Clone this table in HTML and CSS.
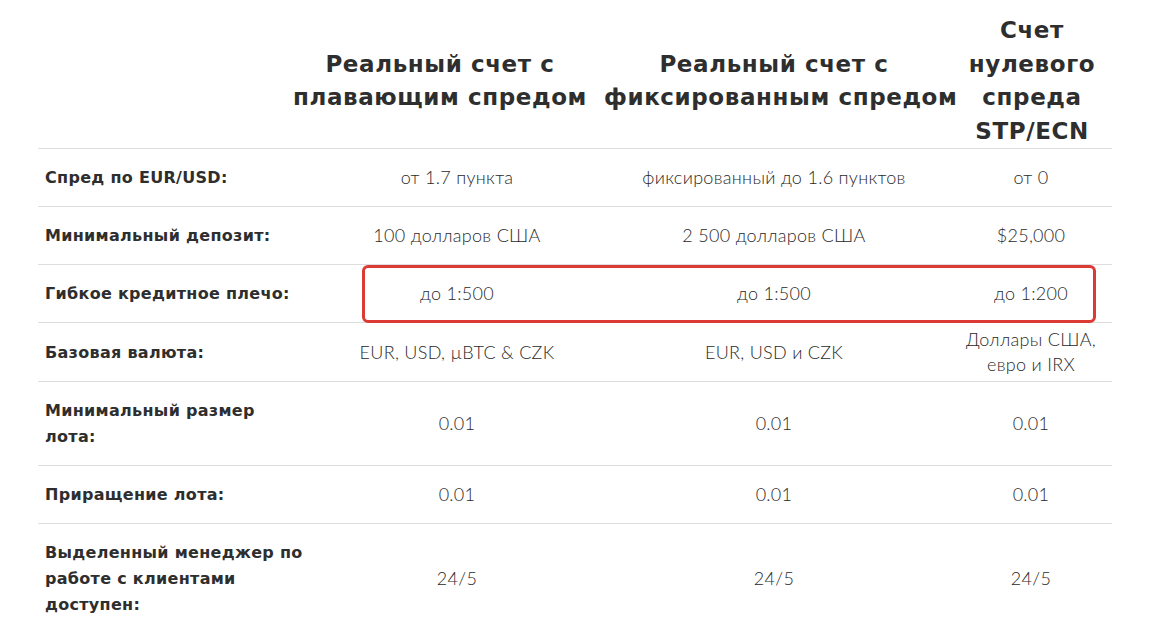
FILE: index.html
```html
<!DOCTYPE html>
<html lang="ru">
<head>
<meta charset="utf-8">
<title>Типы счетов</title>
<link rel="stylesheet" href="styles.css">
</head>
<body>
<div class="wrap">
  <div class="head">
    <div class="h-spacer"></div>
    <div class="h-cell h-1">Реальный счет с<br>плавающим спредом</div>
    <div class="h-cell h-2">Реальный счет с<br>фиксированным спредом</div>
    <div class="h-cell h-3">Счет<br>нулевого<br>спреда<br>STP/ECN</div>
  </div>
  <table class="cmp">
    <colgroup>
      <col class="c-label">
      <col class="c-1">
      <col class="c-2">
      <col class="c-3">
    </colgroup>
    <tbody>
      <tr>
        <td class="lbl">Спред по EUR/USD:</td>
        <td>от 1.7 пункта</td>
        <td>фиксированный до 1.6 пунктов</td>
        <td>от 0</td>
      </tr>
      <tr>
        <td class="lbl">Минимальный депозит:</td>
        <td>100 долларов США</td>
        <td>2 500 долларов США</td>
        <td>$25,000</td>
      </tr>
      <tr class="hl">
        <td class="lbl">Гибкое кредитное плечо:</td>
        <td>до 1:500</td>
        <td>до 1:500</td>
        <td>до 1:200</td>
      </tr>
      <tr>
        <td class="lbl">Базовая валюта:</td>
        <td>EUR, USD, µBTC &amp; CZK</td>
        <td>EUR, USD и CZK</td>
        <td class="tight">Доллары США, евро и IRX</td>
      </tr>
      <tr>
        <td class="lbl">Минимальный размер лота:</td>
        <td>0.01</td>
        <td>0.01</td>
        <td>0.01</td>
      </tr>
      <tr>
        <td class="lbl">Приращение лота:</td>
        <td>0.01</td>
        <td>0.01</td>
        <td>0.01</td>
      </tr>
      <tr class="last">
        <td class="lbl">Выделенный менеджер по работе с клиентами доступен:</td>
        <td>24/5</td>
        <td>24/5</td>
        <td>24/5</td>
      </tr>
    </tbody>
  </table>
  <div class="highlight"></div>
</div>
</body>
</html>
```

FILE: styles.css
```css
html, body {
  margin: 0;
  padding: 0;
  background: #ffffff;
}

body {
  font-family: "DejaVu Sans", "Liberation Sans", sans-serif;
  color: #333333;
}

.wrap {
  position: relative;
  padding: 0 38px;
}

/* header row */
.head {
  width: 1074px;
  display: grid;
  grid-template-columns: 238px 328px 340px 8px 160px;
  align-items: center;
  padding-top: 14px;
  height: 134px;
  border-bottom: 1px solid #dedede;
}

.h-cell {
  font-family: "DejaVu Sans", sans-serif;
  font-weight: 700;
  font-size: 23px;
  letter-spacing: 0.6px;
  line-height: 33.5px;
  color: #2e2e2e;
  text-align: center;
  white-space: nowrap;
}

.h-1 { grid-column: 2; }
.h-2 { grid-column: 3; }
.h-3 { grid-column: 5; }

/* body table */
.cmp {
  width: 1074px;
  border-collapse: collapse;
  table-layout: fixed;
}

.c-label { width: 278px; }
.c-1 { width: 282px; }
.c-2 { width: 352px; }
.c-3 { width: 162px; }

.cmp td {
  font-family: "Lato", sans-serif;
  font-weight: 300;
  font-size: 18px;
  letter-spacing: 0.3px;
  line-height: 25px;
  color: #2a2a2a;
  text-align: center;
  vertical-align: middle;
  padding: 4px 6px;
  border-bottom: 1px solid #dedede;
}

.cmp td.tight {
  padding: 4px 2px;
}

.cmp td.lbl {
  font-family: "DejaVu Sans", sans-serif;
  font-weight: 700;
  font-size: 16px;
  letter-spacing: 0.3px;
  line-height: 26px;
  color: #2e2e2e;
  text-align: left;
  padding: 16px 8px 15px 7px;
}

.cmp tr.last td {
  border-bottom: none;
}

.highlight {
  position: absolute;
  left: 362px;
  top: 265px;
  width: 734px;
  height: 58px;
  box-sizing: border-box;
  border: 3px solid #dc3a34;
  border-radius: 6px;
  pointer-events: none;
}
```
